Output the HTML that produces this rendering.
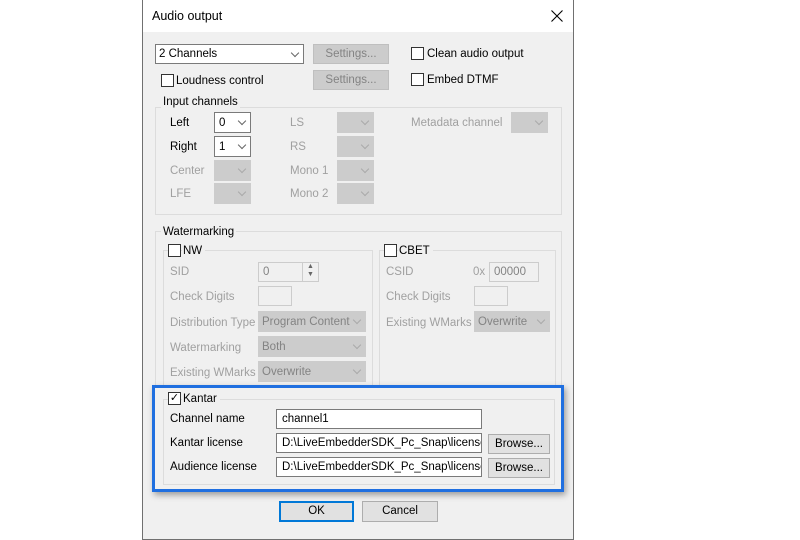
<!DOCTYPE html><html><head><style>
body{margin:0;width:800px;height:536px;background:#fff;position:relative;overflow:hidden;font:11.5px "Liberation Sans",sans-serif;color:#000}
div,span{position:absolute;box-sizing:border-box}
.dlg{left:142px;top:0;width:432px;height:540px;background:#f0f0f0;border:1px solid #707070}
.t{white-space:nowrap;line-height:14px}
.g{color:#a0a0a0}
.cb{width:13px;height:13px;border:1px solid #333;background:#fff}
.cmb{border:1px solid #adadad;background:#e1e1e1}
.cmb.w{background:#fff;border-color:#7a7a7a}
.dis{background:#ccc;border:1px solid #ccc;color:#838383;overflow:hidden}
.ar{right:5px;top:5px;width:6px;height:6px;border-right:1px solid #666;border-bottom:1px solid #666;transform:rotate(45deg)}
.dis .ar{border-color:#aaa}
.btn{background:#e1e1e1;border:1px solid #adadad;text-align:center;line-height:18px}
.btn.d{background:#ccc;border-color:#bfbfbf;color:#838383}
.grp{border:1px solid #dcdcdc}
.lbl{background:#f0f0f0;padding:0 2px}
.inp{background:#fff;border:1px solid #7a7a7a;line-height:18px;padding-left:5px;white-space:nowrap;overflow:hidden}
.inp.d{border-color:#ccc;color:#838383;background:#f0f0f0}
</style></head><body>
<div class="dlg" style="left:142px"></div>
<div style="left:143px;top:0;width:430px;height:32px;background:#fff"></div>
<span class="t" style="left:152px;top:9px;font-size:12.5px">Audio output</span>
<svg style="position:absolute;left:551px;top:10px" width="12" height="12"><path d="M0.5 0.5L11.5 11.5M11.5 0.5L0.5 11.5" stroke="#000" stroke-width="1.1"/></svg>

<div class="cmb w" style="left:155px;top:44px;width:149px;height:20px"><span class="t" style="left:3px;top:2px">2 Channels</span><div class="ar"></div></div>
<div class="btn d" style="left:313px;top:44px;width:76px;height:20px">Settings...</div>
<div class="btn d" style="left:313px;top:70px;width:76px;height:20px">Settings...</div>
<div class="cb" style="left:411px;top:47px"></div><span class="t" style="left:427px;top:47px">Clean audio output</span>
<div class="cb" style="left:411px;top:73px"></div><span class="t" style="left:427px;top:73px">Embed DTMF</span>
<div class="cb" style="left:161px;top:74px"></div><span class="t" style="left:176px;top:74px">Loudness control</span>

<div class="grp" style="left:155px;top:107px;width:407px;height:108px"></div>
<span class="t lbl" style="left:161px;top:95px">Input channels</span>
<span class="t" style="left:170px;top:116px">Left</span>
<div class="cmb w" style="left:214px;top:112px;width:37px;height:21px"><span class="t" style="left:4px;top:3px">0</span><div class="ar"></div></div>
<span class="t" style="left:170px;top:140px">Right</span>
<div class="cmb w" style="left:214px;top:136px;width:37px;height:21px"><span class="t" style="left:4px;top:3px">1</span><div class="ar"></div></div>
<span class="t g" style="left:170px;top:164px">Center</span>
<div class="dis" style="left:214px;top:160px;width:37px;height:21px"><div class="ar"></div></div>
<span class="t g" style="left:170px;top:187px">LFE</span>
<div class="dis" style="left:214px;top:183px;width:37px;height:21px"><div class="ar"></div></div>
<span class="t g" style="left:290px;top:116px">LS</span>
<div class="dis" style="left:337px;top:112px;width:37px;height:21px"><div class="ar"></div></div>
<span class="t g" style="left:290px;top:140px">RS</span>
<div class="dis" style="left:337px;top:136px;width:37px;height:21px"><div class="ar"></div></div>
<span class="t g" style="left:290px;top:164px">Mono 1</span>
<div class="dis" style="left:337px;top:160px;width:37px;height:21px"><div class="ar"></div></div>
<span class="t g" style="left:290px;top:187px">Mono 2</span>
<div class="dis" style="left:337px;top:183px;width:37px;height:21px"><div class="ar"></div></div>
<span class="t g" style="left:411px;top:116px">Metadata channel</span>
<div class="dis" style="left:511px;top:112px;width:37px;height:21px"><div class="ar"></div></div>

<div class="grp" style="left:155px;top:231px;width:407px;height:260px"></div>
<span class="t lbl" style="left:161px;top:225px">Watermarking</span>
<div class="grp" style="left:163px;top:250px;width:210px;height:140px"></div>
<div class="cb" style="left:168px;top:244px"></div><span class="t lbl" style="left:182px;top:244px;padding:0 3px 0 1px">NW</span>
<span class="t g" style="left:170px;top:265px">SID</span>
<div class="inp d" style="left:258px;top:262px;width:61px;height:20px;background:#f0f0f0"><span class="t" style="left:4px;top:2px">0</span></div>
<div style="left:302px;top:263px;width:16px;height:18px;border-left:1px solid #ccc;color:#666;font-size:7px;text-align:center;line-height:8px">▲<br>▼</div>
<span class="t g" style="left:170px;top:290px">Check Digits</span>
<div class="inp d" style="left:258px;top:286px;width:34px;height:20px"></div>
<span class="t g" style="left:170px;top:316px">Distribution Type</span>
<div class="dis" style="left:258px;top:311px;width:108px;height:21px"><span class="t" style="left:3px;top:3px">Program Content</span><div class="ar" style="background:#ccc"></div></div>
<span class="t g" style="left:170px;top:341px">Watermarking</span>
<div class="dis" style="left:258px;top:336px;width:108px;height:21px"><span class="t" style="left:3px;top:3px">Both</span><div class="ar"></div></div>
<span class="t g" style="left:170px;top:366px">Existing WMarks</span>
<div class="dis" style="left:258px;top:361px;width:108px;height:21px"><span class="t" style="left:3px;top:3px">Overwrite</span><div class="ar"></div></div>

<div class="grp" style="left:379px;top:250px;width:177px;height:140px"></div>
<div class="cb" style="left:384px;top:244px"></div><span class="t lbl" style="left:398px;top:244px;padding:0 3px 0 1px">CBET</span>
<span class="t g" style="left:386px;top:265px">CSID</span>
<span class="t g" style="left:473px;top:265px">0x</span>
<div class="inp d" style="left:489px;top:262px;width:50px;height:20px"><span class="t" style="left:4px;top:2px">00000</span></div>
<span class="t g" style="left:386px;top:290px">Check Digits</span>
<div class="inp d" style="left:474px;top:286px;width:34px;height:20px"></div>
<span class="t g" style="left:386px;top:316px">Existing WMarks</span>
<div class="dis" style="left:474px;top:311px;width:76px;height:21px"><span class="t" style="left:3px;top:3px">Overwrite</span><div class="ar"></div></div>

<div style="left:152px;top:385px;width:412px;height:107px;border:3px solid #1f6fe0;background:#f0f0f0;box-shadow:2px 3px 6px rgba(0,0,0,.35)"></div>
<div class="grp" style="left:163px;top:399px;width:392px;height:86px"></div>
<div class="cb" style="left:168px;top:392px;font-size:11px;line-height:11px;text-align:center">✓</div><span class="t lbl" style="left:182px;top:392px;padding:0 3px 0 1px">Kantar</span>
<span class="t" style="left:170px;top:412px">Channel name</span>
<div class="inp" style="left:276px;top:409px;width:206px;height:20px">channel1</div>
<span class="t" style="left:170px;top:436px">Kantar license</span>
<div class="inp" style="left:276px;top:433px;width:206px;height:20px">D:\LiveEmbedderSDK_Pc_Snap\license.li</div>
<div class="btn" style="left:488px;top:434px;width:62px;height:20px">Browse...</div>
<span class="t" style="left:170px;top:460px">Audience license</span>
<div class="inp" style="left:276px;top:457px;width:206px;height:20px">D:\LiveEmbedderSDK_Pc_Snap\license.a</div>
<div class="btn" style="left:488px;top:458px;width:62px;height:20px">Browse...</div>

<div class="btn" style="left:279px;top:501px;width:75px;height:21px;border:2px solid #0078d7;line-height:17px">OK</div>
<div class="btn" style="left:362px;top:501px;width:76px;height:21px;line-height:19px">Cancel</div>
</body></html>
